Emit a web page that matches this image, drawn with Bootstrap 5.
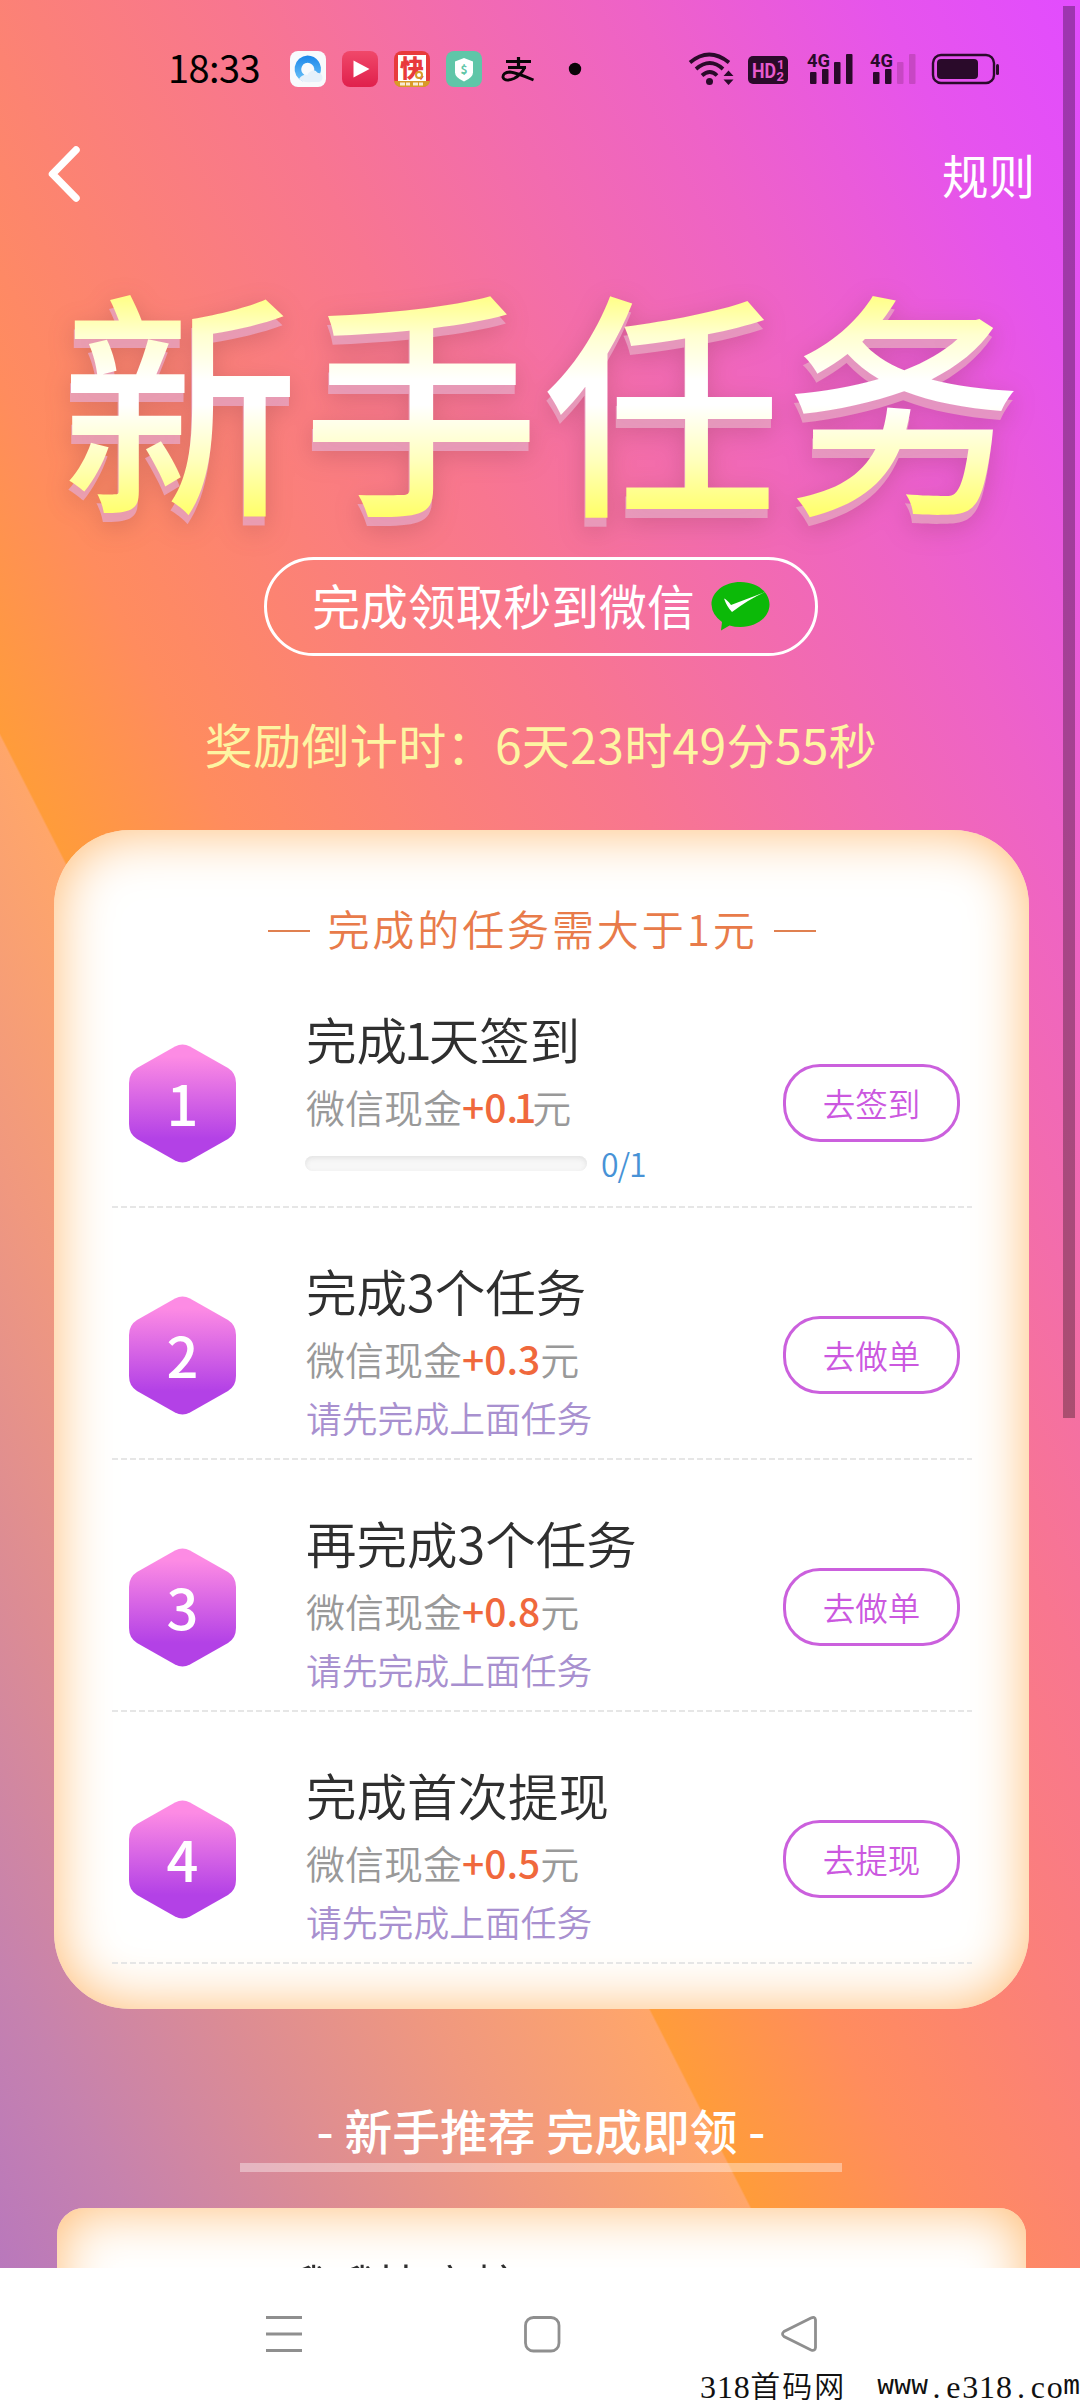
<!DOCTYPE html>
<html lang="zh-CN">
<head>
<meta charset="utf-8">
<meta name="viewport" content="width=device-width, initial-scale=1">
<title>新手任务</title>
<link href="https://cdn.jsdelivr.net/npm/bootstrap@5.3.0/dist/css/bootstrap.min.css" rel="stylesheet">
<style>
html, body { height: 2400px; overflow: hidden; }
body { width: 1080px; font-family: "Noto Sans CJK SC", sans-serif; font-weight: 350; background: #fff; }
.screen { height: 2268px; overflow: hidden;
  background: linear-gradient(63deg, #b978bc 0%, #c682ae 7%, #dc8c94 16%, #f0987f 25%, #ffa66a 34.9%, #ff9c3a 35%, #ff8c5e 43%, #fb8079 53%, #f87690 62%, #f26bb0 72%, #ee62c8 80%, #e654ec 91%, #e24cff 100%); }
.statusbar { height: 138px; padding-left: 168px; }
.clock { font-size: 38px; line-height: 40px; color: #000; font-weight: 400; width: 92px; letter-spacing: -.6px; margin-top: -4px; }
.titlebar { height: 76px; padding: 0 45px 0 46px; }
.titlebar svg { margin-top: -1px; }
.rules { font-size: 46.5px; line-height: 76px; color: #fff; font-weight: 400; margin-top: -5px; }
.hero { height: 343px; padding-top: 39px; padding-left: 6px; }
.hero-text { font-size: 238px; line-height: 282px; letter-spacing: 3px; font-weight: 500; white-space: nowrap;
  background: linear-gradient(180deg, #ffff7a 12%, #ffffd0 27%, #fff 42%, #fff 50%, #ffffbd 68%, #ffff6c 86%, #ffff38 94%);
  -webkit-background-clip: text; background-clip: text; color: transparent;
  filter: drop-shadow(-1px 9px 0 rgba(232,165,195,.8)) drop-shadow(0 6px 12px rgba(120,50,60,.25)); }
.lead-in { height: 273px; padding-left: 2px; }
.pill { width: 554px; height: 99px; border: 3px solid #fff; border-radius: 50px; color: #fff; font-size: 47.8px; line-height: 60px; font-weight: 400; }
.pill span { margin-top: -4px; }
.countdown { font-size: 48px; line-height: 60px; letter-spacing: .35px; color: #fdf5a2; margin-top: 57px; font-weight: 400; }
.task-card { width: 975px; height: 1179px; margin-left: 54px; border-radius: 76px; background: #fff; box-shadow: inset 0 0 56px #ffba70; padding: 68px 57px 0 58px; }
.card-note { font-size: 42px; line-height: 60px; letter-spacing: 2.9px; color: #e87b4a; white-space: nowrap; height: 58px; }
.card-note .dash { display: inline-block; width: 42px; height: 2.500px; background: #e08050; vertical-align: 14px; margin: 0 17px 0 0; }
.card-note .dash.after { margin: 0 0 0 16px; }
.task { height: 252px; padding-left: 17px; padding-right: 12px;
  background: repeating-linear-gradient(90deg, #e6e6e6 0 6px, transparent 6px 9px) bottom / 100% 2px no-repeat; }
.hexa { width: 107px; height: 119px; margin-top: 88px; }
.info { width: 400px; margin-left: 70px; padding-top: 48px; }
.t-name { font-size: 50.5px; line-height: 68px; color: #2f2f2f; white-space: nowrap; }
.t-name i { font-style: normal; margin: 0 -3px; }
.t-cash { font-size: 39px; line-height: 60px; height: 66px; margin-top: 4px; color: #999; white-space: nowrap; }
.t-cash b { color: #f0683c; font-weight: 500; }
.t-cash i { font-style: normal; margin: 0 -4px; }
.t-lock { font-size: 35.8px; line-height: 46px; color: #a890cf; white-space: nowrap; }
.meter { width: 282px; height: 15px; border-radius: 8px; background: #f7f7f7; box-shadow: inset 0 2px 5px #e2e2e2; flex-shrink: 0; margin-left: -1px; }
.ratio { font-size: 32px; line-height: 42px; color: #4792d6; margin-left: 14px; letter-spacing: -1px; }
.go { width: 177px; height: 78px; border: 3px solid #cb60dd; border-radius: 37px; color: #cb58df; font-size: 32.5px; line-height: 40px; margin-top: 108px; font-weight: 350; padding: 0; }
.rec { height: 199px; padding-top: 91px; padding-left: 2px; }
.rec-title { font-size: 47.8px; line-height: 60px; font-weight: 500; color: #fff; white-space: pre; }
.rec-line { width: 602px; height: 9px; margin-top: 3px; background: rgba(255,255,255,.38); }
.next-card { width: 969px; height: 300px; margin-left: 57px; border-radius: 27px; background: #fff; box-shadow: inset 0 0 56px #ffba70; padding: 43px 0 0 222px; font-size: 48.5px; line-height: 68px; color: #2f2f2f; }
.sysnav { height: 132px; background: #fff; position: relative; }
.sysnav svg { display: block; }
.wm { position: absolute; right: 0; bottom: -7px; color: #111; font-family: "Liberation Serif", "Noto Sans CJK SC", serif; font-size: 32px; line-height: 40px; }
.wm .han { font-size: 30px; letter-spacing: 2px; margin-right: 31px; }
.wm u { text-decoration: none; width: 16.900px; text-align: center; }
.wm u.ltr { font-family: "Liberation Mono", monospace; font-size: 28px; }
.scrollthumb { position: absolute; left: 1063px; top: 6px; width: 12px; height: 1412px; background: rgba(0,0,0,.3); }
</style>
</head>
<body>
<main class="screen">
  <div class="statusbar d-flex align-items-center">
    <span class="clock">18:33</span>
    <svg width="820" height="60" viewBox="260 39 820 60">
      <defs><linearGradient id="pl" x2="0" y2="1"><stop stop-color="#f0486a"/><stop offset="1" stop-color="#e0204c"/></linearGradient>
      <linearGradient id="qb" x2="0" y2="1"><stop stop-color="#1c86ea"/><stop offset="1" stop-color="#6cc4f8"/></linearGradient></defs>
      <rect x="290" y="51" width="36" height="36" rx="8" fill="#f8fafd"/>
      <path d="M307.500 55.500a13.500 13.500 0 0 1 12.500 18.500l-6-3a6.500 6.500 0 1 0-9.500 4l-1.500 6.500a13.500 13.500 0 0 1 4.500-26z" fill="url(#qb)"/>
      <path d="M299 79q5 4 12 3h8q4-1 3.500-5t-5-4q-2-4-6-2t-4 4q-5-1-8.500 4z" fill="#e6f1fb"/>
      <rect x="342" y="51" width="36" height="36" rx="8" fill="url(#pl)"/>
      <path d="M353.500 60.500v17l16-8.500z" fill="#fff"/>
      <rect x="394" y="51" width="36" height="36" rx="8" fill="#e83a3c"/>
      <rect x="398" y="55" width="28" height="26" fill="#fff"/>
      <text x="412" y="77" font-size="24" font-weight="900" fill="#e83a3c" text-anchor="middle">快</text>
      <path d="M394 81h36q-1 6-8 6h-20q-7 0-8-6z" fill="#d99a28"/>
      <g fill="#fff"><path d="M400 82.500h5v3h-5zM406 82.500h4v3h-4zM413 82.500h5v3h-5zM419 82.500h4v3h-4z" opacity=".8"/></g>
      <circle cx="419" cy="75" r="3" fill="#fff" stroke="#d99a28" stroke-width="2"/>
      <rect x="446" y="51" width="36" height="36" rx="8" fill="#5fc6a8"/>
      <path d="M464 58l9 3.500v11q0 5-9 9q-9-4-9-9v-11z" fill="#fff"/>
      <text x="464" y="73.500" font-size="12" font-weight="700" fill="#5fc6a8" text-anchor="middle">$</text>
      <g fill="none" stroke="#0a0508" stroke-width="3.200"><path d="M506 61.500h25M518.500 57v10.500M508 67.500h18"/><path d="M525 67q-4 8-11 11.500q-9 3.500-11-1q-.5-5 7-5.500q6 .5 23.500 8" stroke-width="2.800"/></g>
      <circle cx="575" cy="69" r="6.200" fill="#0a0508"/>
      <g fill="none" stroke="#2a0a2a" stroke-width="3.800"><path d="M690 62.500q19-16 39 0M696 69q14-12 27 0M702 75.500q8-7 15 0"/></g>
      <circle cx="709.500" cy="81.500" r="3.500" fill="#2a0a2a"/>
      <path d="M728.500 70.500l5 5.500h-10zM728.500 85l5-5.500h-10z" fill="#2a0a2a"/>
      <rect x="748" y="56" width="40" height="28" rx="5" fill="#2a0a2a"/>
      <g fill="#e65bcd" font-family="Roboto, sans-serif" font-weight="700"><text x="752" y="78" font-size="21" textLength="24" lengthAdjust="spacingAndGlyphs">HD</text><text x="777" y="69" font-size="13">1</text><text x="776.500" y="80.500" font-size="13">2</text></g>
      <g fill="#2a0a2a" font-family="Roboto, sans-serif" font-weight="700" font-size="19"><text x="807" y="66.500" textLength="23" lengthAdjust="spacingAndGlyphs">4G</text><text x="870" y="66.500" textLength="23" lengthAdjust="spacingAndGlyphs">4G</text></g>
      <g fill="#2a0a2a"><rect x="810" y="72" width="6.500" height="12" rx="1"/><rect x="822" y="69" width="6.500" height="15" rx="1"/><rect x="834" y="62" width="6.500" height="22" rx="1"/><rect x="846" y="54" width="6.500" height="30" rx="1"/><rect x="873" y="72" width="6.500" height="12" rx="1"/><rect x="885" y="69" width="6.500" height="15" rx="1"/></g>
      <g fill="#c747c4"><rect x="897" y="62" width="6.500" height="22" rx="1"/><rect x="909" y="54" width="6.500" height="30" rx="1"/></g>
      <rect x="933" y="55" width="61" height="28" rx="8" fill="none" stroke="#2a0a2a" stroke-width="2.400"/>
      <rect x="937" y="59" width="41" height="20" rx="4" fill="#2a0a2a"/>
      <rect x="996" y="64" width="3" height="11" rx="1.500" fill="#2a0a2a"/>
    </svg>
  </div>
  <div class="titlebar d-flex justify-content-between align-items-center">
    <svg width="40" height="64" viewBox="0 0 40 64"><path d="M30 6L6.500 30L30 54" fill="none" stroke="#fff" stroke-width="7.500" stroke-linecap="round" stroke-linejoin="round"/></svg>
    <span class="rules">规则</span>
  </div>
  <div class="hero d-flex justify-content-center"><div class="hero-text">新手任务</div></div>
  <div class="lead-in d-flex flex-column align-items-center">
    <div class="pill d-flex align-items-center justify-content-center gap-3"><span>完成领取秒到微信</span>
      <svg width="59" height="50" viewBox="0 0 59 50"><path d="M29.500 0C46 0 58.500 10 58.500 22.500S46 45 29.500 45q-6 0-11-1.500L10 48.500l1-8.500Q1 33 .5 22.500C.5 10 13 0 29.500 0z" fill="#0cb908"/><path d="M13 16.500q3 1 7 6.500q18-7 34-13q-16 7-33 20q-5-5-8-13.500z" fill="#fff"/></svg>
    </div>
    <div class="countdown">奖励倒计时：6天23时49分55秒</div>
  </div>
  <section class="task-card">
    <div class="card-note text-center"><span class="dash"></span>完成的任务需大于1元<span class="dash after"></span></div>
    <div id="tasks"></div>
  </section>
  <div class="rec d-flex flex-column align-items-center"><div class="rec-title">- 新手推荐 完成即领 -</div><div class="rec-line"></div></div>
  <section class="next-card">哦哦快库校</section>
</main>
<nav class="sysnav">
  <svg width="1080" height="100" viewBox="0 2268 1080 100" fill="none" stroke="#8f8f8f" stroke-width="2.800"><path d="M266 2317.500h36M266 2334h36M266 2350.500h36"/><rect x="525.500" y="2317.500" width="33.500" height="33.500" rx="8"/><path d="M811 2318q4-2 4.500 2v27.500q-.5 4-4.500 2.500l-27-13.500q-3-2.500 0-5z"/></svg>
  <div class="wm d-flex"><u>3</u><u>1</u><u>8</u><span class="han">首码网</span><u class="ltr">w</u><u class="ltr">w</u><u class="ltr">w</u><u>.</u><u>e</u><u>3</u><u>1</u><u>8</u><u>.</u><u>c</u><u>o</u><u class="ltr">m</u></div>
</nav>
<div class="scrollthumb"></div>
<script>
const tasks = [["完成<i>1</i>天签到", "0.<i>1</i>", "去签到"], ["完成3个任务", "0.3", "去做单"], ["再完成3个任务", "0.8", "去做单"], ["完成首次提现", "0.5", "去提现"]];
document.getElementById("tasks").innerHTML = tasks.map((t, i) => `
<div class="task d-flex">
  <svg class="hexa flex-shrink-0" viewBox="0 0 107 119"><defs><linearGradient id="hx${i}" x2="0" y2="1"><stop offset=".1" stop-color="#fd8be4"/><stop offset=".8" stop-color="#b341e6"/></linearGradient></defs>
  <path d="M46 2.500Q53.500-1.500 61 2.500L99 24Q107 29 107 39V80Q107 90 99 95L61 116.500Q53.500 120.500 46 116.500L8 95Q0 90 0 80V39Q0 29 8 24Z" fill="url(#hx${i})"/>
  <text x="53.500" y="82" text-anchor="middle" font-size="56" font-weight="500" fill="#fff">${i + 1}</text></svg>
  <div class="info"><div class="t-name">${t[0]}</div><div class="t-cash">微信现金<b>+${t[1]}</b>元</div>
  ${i ? '<div class="t-lock">请先完成上面任务</div>' : '<div class="d-flex align-items-center"><div class="meter"></div><span class="ratio">0/1</span></div>'}</div>
  <button class="btn go ms-auto">${t[2]}</button>
</div>`).join("");
</script>
<script src="https://cdn.jsdelivr.net/npm/bootstrap@5.3.0/dist/js/bootstrap.bundle.min.js"></script>
</body>
</html>
